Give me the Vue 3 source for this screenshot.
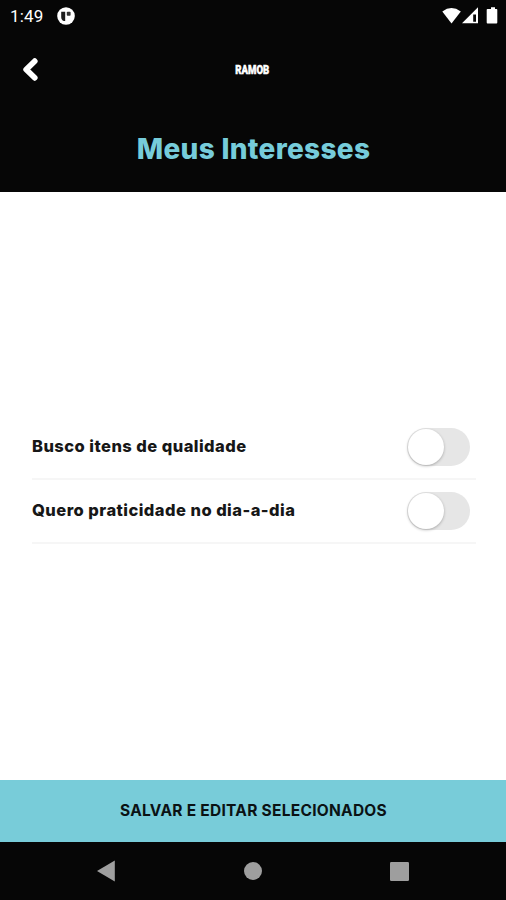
<script setup>
import { ref } from 'vue'

const interests = ref([
  { label: 'Busco itens de qualidade', on: false, key: 'quality' },
  { label: 'Quero praticidade no dia-a-dia', on: false, key: 'practical' },
])
</script>

<template>
  <div class="screen">
    <header class="top">
      <div class="status">
        <span class="clock">1:49</span>
        <svg class="app-icon" width="18" height="18" viewBox="0 0 18 18">
          <circle cx="9" cy="9" r="8.8" fill="#fff" />
          <path d="M4.2 4.8H8.2V13.9H6.8Q4.2 13.2 4.2 10Z" fill="#1c1c1c" />
          <rect x="9.8" y="4.8" width="3.8" height="4" rx=".8" fill="#333" />
        </svg>
        <svg class="signals" width="56" height="18" viewBox="0 0 56 18" fill="#fff">
          <path d="M0.3 4.5Q9.5-2.3 18.8 4.5L9.5 16.4Z" />
          <path fill-rule="evenodd" d="M20 16.3L36 .3V16.3ZM31.2 7.5V14.8H34V7.5Z" />
          <path d="M47.2 2H49V.3H53V2H54.6Q55.3 2 55.3 2.8V15.5Q55.3 16.5 54.4 16.5H45.6Q44.7 16.5 44.7 15.5V2.8Q44.7 2 45.5 2Z" />
        </svg>
      </div>
      <div class="nav">
        <button class="back" aria-label="Voltar">
          <svg width="18" height="26" viewBox="0 0 18 26">
            <path d="M13.7 4.2L5.2 12.5L13.7 20.8" fill="none" stroke="#fff" stroke-width="5.8" stroke-linecap="round" stroke-linejoin="round" />
          </svg>
        </button>
        <span class="brand"><b>RAMOB</b></span>
      </div>
      <h1 class="title">Meus Interesses</h1>
    </header>

    <main class="content">
      <label v-for="item in interests" :key="item.key" class="row" :class="item.key">
        <span class="label">{{ item.label }}</span>
        <input v-model="item.on" class="check" type="checkbox" />
        <span class="switch" :class="{ on: item.on }"><i class="thumb"></i></span>
      </label>
    </main>

    <button class="save"><span>SALVAR E EDITAR SELECIONADOS</span></button>

    <footer class="system">
      <svg width="18" height="22" viewBox="0 0 18 22"><path d="M0 11L17.8.5V21.5Z" fill="#9e9e9e" /></svg>
      <svg width="18" height="18" viewBox="0 0 18 18"><circle cx="9" cy="9" r="9" fill="#9e9e9e" /></svg>
      <svg width="19" height="19" viewBox="0 0 19 19"><rect width="19" height="19" rx="1.2" fill="#9e9e9e" /></svg>
    </footer>
  </div>
</template>

<style>
body {
  margin: 0;
  background: #fff;
}
</style>

<style scoped>
.screen {
  box-sizing: border-box;
  width: 506px;
  height: 900px;
  display: flex;
  flex-direction: column;
  overflow: hidden;
  background: #fff;
  font-family: Inter, "Liberation Sans", sans-serif;
}
button {
  border: 0;
  padding: 0;
  font: inherit;
}
.top {
  height: 192px;
  flex: none;
  background: #060606;
}
.status {
  height: 32px;
  display: flex;
  align-items: center;
  box-sizing: border-box;
  padding: 0 8px 0 10px;
  color: #fff;
}
.clock {
  width: 47px;
  font: 400 17px/20px Roboto, sans-serif;
  letter-spacing: .2px;
}
.signals {
  margin-left: auto;
}
.nav {
  height: 76px;
  display: grid;
  grid-template-columns: 60px 1fr 60px;
  align-items: center;
}
.back {
  display: flex;
  padding-left: 21px;
  background: none;
}
.brand {
  display: flex;
  justify-content: center;
  padding: 0 1px 1px 0;
  color: #fff;
  font: 900 12px/14px Roboto, sans-serif;
}
.brand b {
  font-weight: 900;
  -webkit-text-stroke: .5px #fff;
  transform: scaleX(.8);
}
.title {
  margin: 22px 0 0;
  padding-left: 1px;
  text-align: center;
  color: #76ccda;
  font-size: 28px;
  line-height: 38px;
  font-weight: 800;
  letter-spacing: .3px;
}
.content {
  flex: 1;
  display: flex;
  flex-direction: column;
  padding: 224px 30px 0 32px;
}
.row {
  height: 64px;
  box-sizing: border-box;
  display: flex;
  align-items: center;
  justify-content: space-between;
  padding-right: 6px;
  border-bottom: 2px solid #f6f6f6;
}
.label {
  padding-bottom: 2px;
  color: #171717;
  font-size: 16.5px;
  line-height: 24px;
  font-weight: 800;
  letter-spacing: .46px;
}
.check {
  display: none;
}
.switch {
  width: 63px;
  height: 38px;
  box-sizing: border-box;
  padding: 1px;
  border-radius: 19px;
  background: #e6e6e6;
}
.thumb {
  display: block;
  width: 36px;
  height: 36px;
  border-radius: 50%;
  background: #fff;
  box-shadow: 0 1px 3px #0004;
}
.switch.on {
  background: #76ccda;
}
.switch.on .thumb {
  margin-left: 25px;
}
.save {
  height: 62px;
  flex: none;
  padding: 0 0 2px 1px;
  background: #78ccd9;
  color: #0b1214;
  font-size: 15.5px;
  font-weight: 700;
  letter-spacing: .27px;
}
.system {
  height: 58px;
  flex: none;
  box-sizing: border-box;
  display: flex;
  align-items: center;
  justify-content: space-between;
  padding: 0 97px;
  background: #060606;
}
</style>
